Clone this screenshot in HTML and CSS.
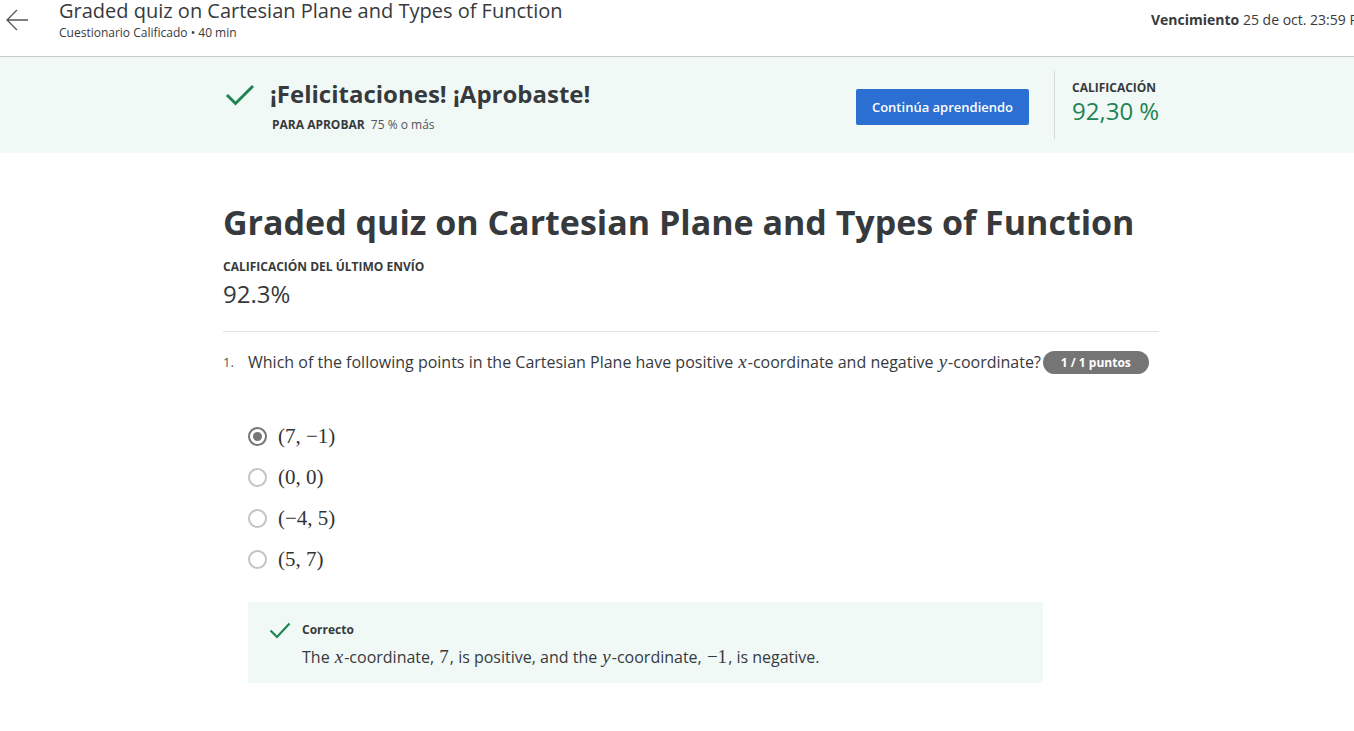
FILE: index.html
```html
<!DOCTYPE html>
<html lang="es">
<head>
<meta charset="utf-8">
<title>Graded quiz</title>
<link rel="stylesheet" href="styles.css">
</head>
<body>
<header class="topbar">
  <div class="top-left">
    <svg class="back" width="26" height="24" viewBox="0 0 26 24"><path d="M24 12H3M13 2L3 12l10 10" fill="none" stroke="#555" stroke-width="1.3"/></svg>
    <div class="top-titles">
      <div class="top-title">Graded quiz on Cartesian Plane and Types of Function</div>
      <div class="top-sub">Cuestionario Calificado • 40 min</div>
    </div>
  </div>
  <div class="due"><b>Vencimiento</b> 25 de oct. 23:59 PDT</div>
</header>

<section class="banner">
  <div class="banner-inner">
    <div class="pass">
      <svg class="pass-check" width="30" height="22" viewBox="0 0 30 22"><path d="M2 11l8.5 8.5L28 2" fill="none" stroke="#1f8354" stroke-width="3"/></svg>
      <div>
        <div class="pass-title">¡Felicitaciones! ¡Aprobaste!</div>
        <div class="pass-sub"><b>PARA APROBAR</b> 75 % o más</div>
      </div>
    </div>
    <button class="cta">Continúa aprendiendo</button>
    <div class="grade">
      <div class="grade-label">CALIFICACIÓN</div>
      <div class="grade-value">92,30 %</div>
    </div>
  </div>
</section>

<main class="content">
  <h1 class="quiz-title">Graded quiz on Cartesian Plane and Types of Function</h1>
  <div class="last-label">CALIFICACIÓN DEL ÚLTIMO ENVÍO</div>
  <div class="last-value">92.3%</div>
  <hr class="sep">

  <div class="question">
    <span class="qnum">1.</span>
    <span class="qtext">Which of the following points in the Cartesian Plane have positive <i class="m">x</i>-coordinate and negative <i class="m">y</i>-coordinate?</span>
    <span class="badge">1 / 1 puntos</span>
  </div>

  <ul class="options">
    <li class="opt"><span class="radio checked"></span><span class="math">(7, −1)</span></li>
    <li class="opt"><span class="radio"></span><span class="math">(0, 0)</span></li>
    <li class="opt"><span class="radio"></span><span class="math">(−4, 5)</span></li>
    <li class="opt"><span class="radio"></span><span class="math">(5, 7)</span></li>
  </ul>

  <div class="feedback">
    <svg class="fb-check" width="22" height="17" viewBox="0 0 22 17"><path d="M1.5 8.5l6.5 6.5L20.5 1.5" fill="none" stroke="#1f8354" stroke-width="2.2"/></svg>
    <div>
      <div class="fb-title">Correcto</div>
      <div class="fb-text">The <i class="m">x</i>-coordinate, <span class="mn">7</span>, is positive, and the <i class="m">y</i>-coordinate, <span class="mn">−1</span>, is negative.</div>
    </div>
  </div>
</main>
</body>
</html>
```

FILE: styles.css
```css
* { box-sizing: border-box; }
html, body { margin: 0; padding: 0; }
body {
  font-family: "Open Sans", "Liberation Sans", sans-serif;
  color: #1f1f1f;
  background: #fff;
  width: 1354px;
  overflow: hidden;
}
.topbar {
  height: 57px;
  border-bottom: 1px solid #c9c9c9;
  display: flex;
  white-space: nowrap;
}
.top-left { display: flex; align-items: flex-start; flex: 1; }
.back { margin: 8px 0 0 4px; }
.top-titles { margin-left: 29px; }
.top-title { font-size: 20px; line-height: 22px; color: #373a3c; }
.top-sub { font-size: 12px; line-height: 16px; color: #373a3c; margin-top: 3px; }
.due { font-size: 14px; color: #373a3c; padding-top: 10px; width: 203px; overflow: hidden; }
.due b { font-weight: 700; }

.banner { background: #f1f9f6; height: 96px; }
.banner-inner {
  width: 936px;
  margin-left: 223px;
  display: flex;
  align-items: center;
  height: 96px;
}
.pass { display: flex; align-items: flex-start; flex: 1; margin-left: 2px; }
.pass-check { margin-top: 7px; margin-right: 15px; }
.pass-title { font-size: 24px; font-weight: 700; color: #373a3c; line-height: 32px; margin-top: 1px; }
.pass-sub { font-size: 12px; color: #555; margin-top: 6px; margin-left: 2px; }
.pass-sub b { color: #373a3c; margin-right: 3px; }
.cta {
  background: #2a6fd1;
  color: #fff;
  border: 0;
  border-radius: 2px;
  width: 173px;
  height: 36px;
  font-family: inherit;
  font-size: 13px;
  font-weight: 600;
  margin-top: 4px;
  margin-right: 25px;
  padding: 0;
}
.grade {
  border-left: 1px solid #d8d8d8;
  height: 68px;
  padding-left: 17px;
  width: 105px;
  white-space: nowrap;
}
.grade-label { font-size: 12px; font-weight: 700; color: #373a3c; margin-top: 9px; line-height: 16px; }
.grade-value { font-size: 24px; color: #1f8354; line-height: 26px; margin-top: 2px; }

.content { width: 936px; margin-left: 223px; }
.quiz-title {
  font-size: 34px;
  font-weight: 700;
  color: #373a3c;
  margin: 47px 0 0 0;
  line-height: 44px;
}
.last-label { font-size: 12px; font-weight: 700; color: #373a3c; margin-top: 15px; line-height: 16px; }
.last-value { font-size: 24px; color: #373a3c; line-height: 30px; margin-top: 4px; }
.sep { border: 0; border-top: 1px solid #e1e1e1; margin: 22px 0 0 0; }

.question { display: flex; align-items: center; margin-top: 18px; height: 24px; }
.qnum { font-size: 13px; color: #555; width: 25px; }
.qtext { font-size: 16px; color: #373a3c; white-space: nowrap; }
.m { font-family: "Liberation Serif", "DejaVu Serif", serif; font-style: italic; font-size: 19px; padding: 0 1px; }
.mn { font-family: "Liberation Serif", "DejaVu Serif", serif; font-size: 19px; padding: 0 1px; }
.badge {
  background: #757575;
  color: #fff;
  font-size: 12px;
  font-weight: 700;
  border-radius: 12px;
  height: 23px;
  line-height: 23px;
  width: 106px;
  text-align: center;
  margin-left: 2px;
  margin-top: 1px;
  flex: none;
}

.options { list-style: none; padding: 0; margin: 42px 0 0 25px; }
.opt { display: flex; align-items: center; height: 41px; }
.radio {
  width: 19px; height: 19px;
  border-radius: 50%;
  border: 2px solid #c4c4c4;
  margin-right: 11px;
  position: relative;
  flex: none;
}
.radio.checked { border-color: #757575; }
.radio.checked::after {
  content: "";
  position: absolute;
  left: 3px; top: 3px;
  width: 9px; height: 9px;
  border-radius: 50%;
  background: #757575;
}
.math { font-family: "Liberation Serif", "DejaVu Serif", serif; font-size: 21px; color: #333; }

.feedback {
  background: #f1f9f6;
  margin: 22px 0 0 25px;
  width: 795px;
  height: 81px;
  display: flex;
  align-items: flex-start;
  padding: 20px 0 0 21px;
}
.fb-check { margin-right: 11px; flex: none; }
.fb-title { font-size: 12px; font-weight: 700; color: #373a3c; line-height: 16px; margin-top: 0; }
.fb-text { font-size: 16px; color: #373a3c; margin-top: 7px; line-height: 24px; }
```
